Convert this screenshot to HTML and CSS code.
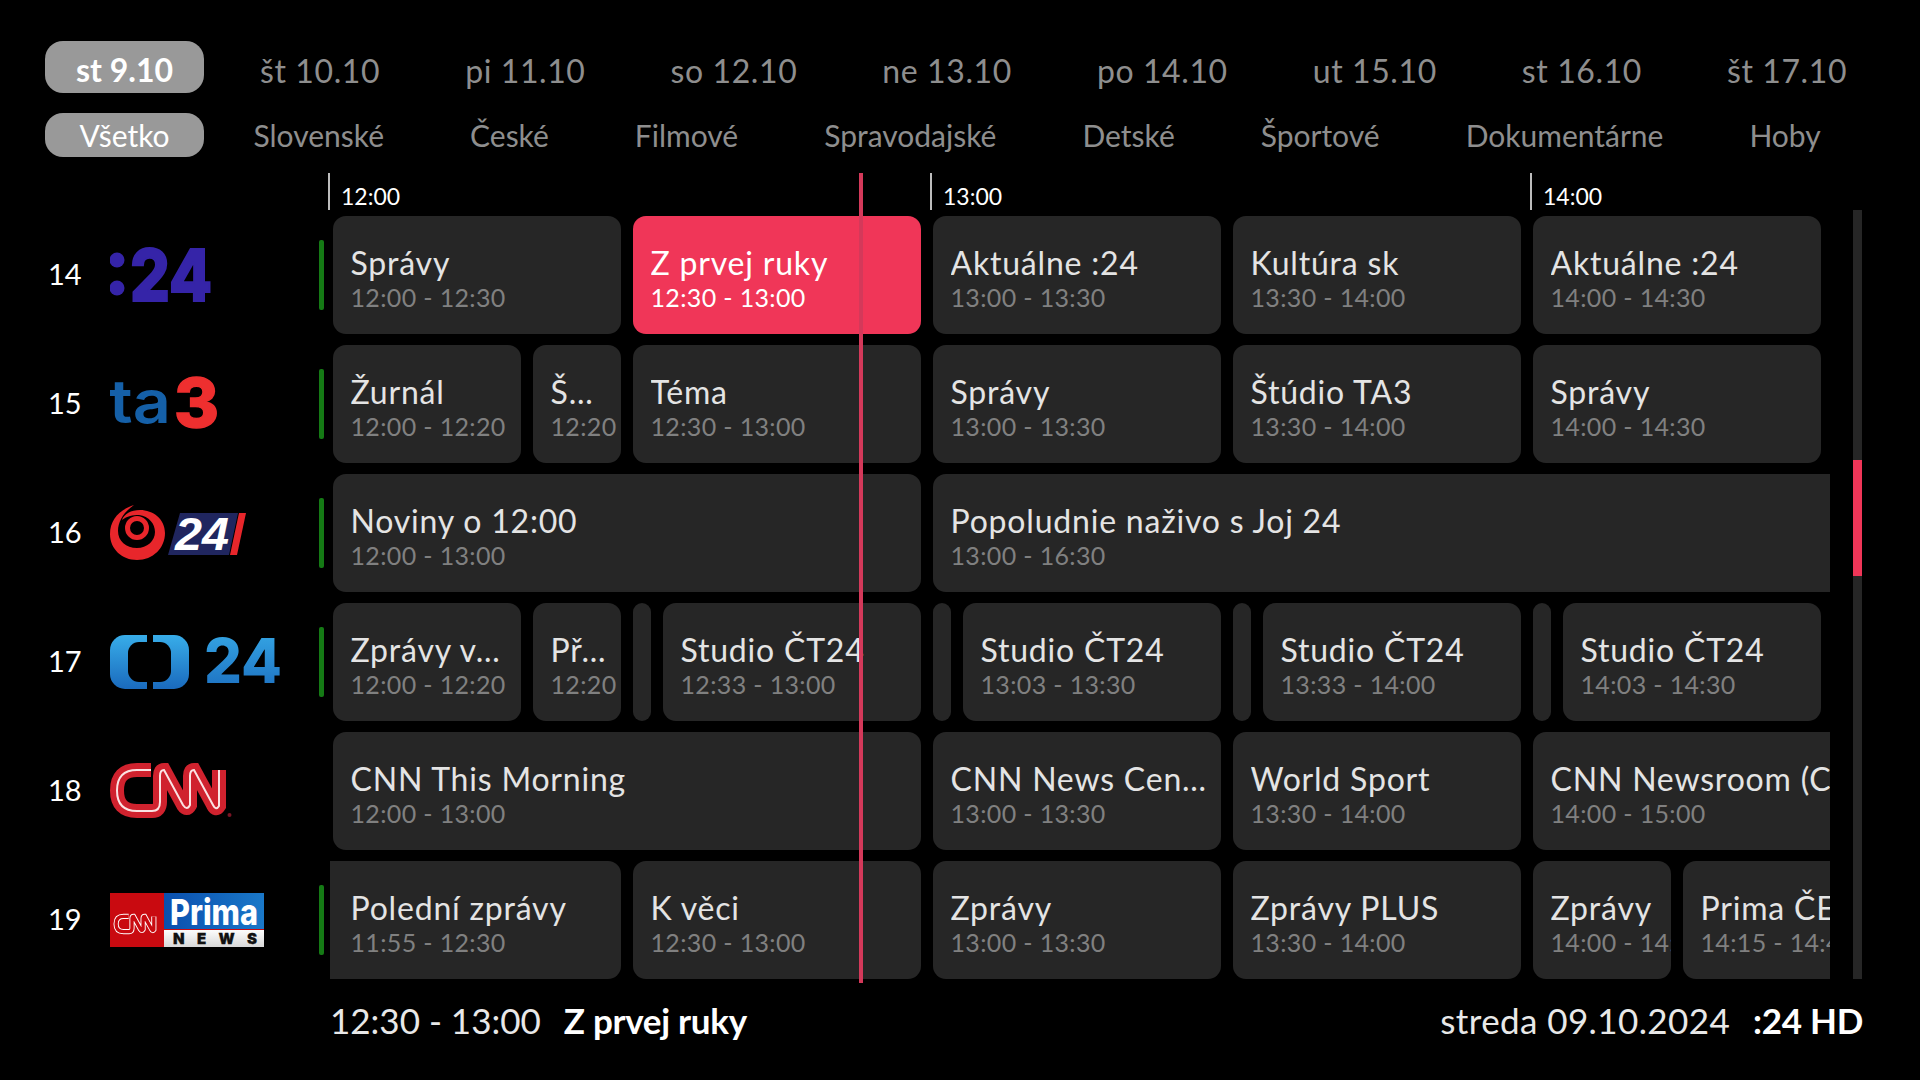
FILE: index.html
```html
<!DOCTYPE html>
<html lang="sk">
<head>
  <meta charset="UTF-8">
  <title>TV program</title>
  <link rel="stylesheet" href="styles.css">
</head>
<body>
  <nav class="tabs day-tabs">
    <div class="tab tab-active tab-bold">st 9.10</div>
    <div class="tab">št 10.10</div>
    <div class="tab">pi 11.10</div>
    <div class="tab">so 12.10</div>
    <div class="tab">ne 13.10</div>
    <div class="tab">po 14.10</div>
    <div class="tab">ut 15.10</div>
    <div class="tab">st 16.10</div>
    <div class="tab">št 17.10</div>
  </nav>
  <nav class="tabs genre-tabs">
    <div class="tab tab-active">Všetko</div>
    <div class="tab">Slovenské</div>
    <div class="tab">České</div>
    <div class="tab">Filmové</div>
    <div class="tab">Spravodajské</div>
    <div class="tab">Detské</div>
    <div class="tab">Športové</div>
    <div class="tab">Dokumentárne</div>
    <div class="tab">Hoby</div>
  </nav>

  <div class="timeline">
    <div class="hour hour-first">12:00</div>
    <div class="hour">13:00</div>
    <div class="hour hour-last">14:00</div>
  </div>

  <div class="now-line"></div>

  <div class="guide">
    <div class="rows">

      <div class="row">
        <div class="ch-num">14</div>
        <div class="ch-logo">
          <svg viewBox="110 216 209 118" width="209" height="118">
            <circle cx="117" cy="260" r="7.500" fill="#3524a8"/>
            <circle cx="117" cy="288" r="7.500" fill="#3524a8"/>
            <text class="logo-text" x="130" y="301" font-size="72" textLength="82" lengthAdjust="spacingAndGlyphs" fill="#3524a8" stroke="#3524a8" stroke-width="2">24</text>
          </svg>
        </div>
        <div class="live-bar"></div>
        <div class="programs">
          <div class="card w288"><div class="title">Správy</div><div class="time">12:00 - 12:30</div></div>
          <div class="card w288 card-active"><div class="title">Z prvej ruky</div><div class="time">12:30 - 13:00</div></div>
          <div class="card w288"><div class="title">Aktuálne :24</div><div class="time">13:00 - 13:30</div></div>
          <div class="card w288"><div class="title">Kultúra sk</div><div class="time">13:30 - 14:00</div></div>
          <div class="card w288"><div class="title">Aktuálne :24</div><div class="time">14:00 - 14:30</div></div>
        </div>
      </div>

      <div class="row">
        <div class="ch-num">15</div>
        <div class="ch-logo">
          <svg viewBox="110 345 209 118" width="209" height="118">
            <text class="logo-text logo-medium" x="109" y="423" font-size="60" textLength="62" lengthAdjust="spacingAndGlyphs" fill="#1560a8">ta</text>
            <text class="logo-text" x="174" y="427" font-size="68" textLength="45" lengthAdjust="spacingAndGlyphs" fill="#ee2f2f" stroke="#ee2f2f" stroke-width="1.500">3</text>
          </svg>
        </div>
        <div class="live-bar"></div>
        <div class="programs">
          <div class="card w188"><div class="title">Žurnál</div><div class="time">12:00 - 12:20</div></div>
          <div class="card w88"><div class="title">Š…</div><div class="time">12:20</div></div>
          <div class="card w288"><div class="title">Téma</div><div class="time">12:30 - 13:00</div></div>
          <div class="card w288"><div class="title">Správy</div><div class="time">13:00 - 13:30</div></div>
          <div class="card w288"><div class="title">Štúdio TA3</div><div class="time">13:30 - 14:00</div></div>
          <div class="card w288"><div class="title">Správy</div><div class="time">14:00 - 14:30</div></div>
        </div>
      </div>

      <div class="row">
        <div class="ch-num">16</div>
        <div class="ch-logo">
          <svg viewBox="110 474 209 118" width="209" height="118">
            <path d="M134 505 C119 510 110 520 110 534 C110 549 122 560 137 560 C153 560 165 548 165 533 C165 519 153 510 140 510 C131 510 124 514 122 520 C127 516 133 515 139 515 C149 516 155 524 155 532 C155 541 147 548 137 548 C126 548 118 541 118 531 C118 521 124 512 134 505 Z" fill="#e8262b"/>
            <circle cx="137" cy="528" r="9.500" fill="none" stroke="#e8262b" stroke-width="5"/>
            <path d="M180 513 H238 L229 555 H168 Z" fill="#20265f"/>
            <path d="M239 513 H246 L237 555 H230 Z" fill="#e8262b"/>
            <text class="logo-text logo-italic" x="175" y="550" font-size="47" textLength="54" lengthAdjust="spacingAndGlyphs" fill="#fff">24</text>
          </svg>
        </div>
        <div class="live-bar"></div>
        <div class="programs">
          <div class="card w588"><div class="title">Noviny o 12:00</div><div class="time">12:00 - 13:00</div></div>
          <div class="card w2088"><div class="title">Popoludnie naživo s Joj 24</div><div class="time">13:00 - 16:30</div></div>
        </div>
      </div>

      <div class="row">
        <div class="ch-num">17</div>
        <div class="ch-logo">
          <svg viewBox="110 603 209 118" width="209" height="118">
            <defs>
              <linearGradient id="ct-blue" x1="0" y1="0" x2="0" y2="1">
                <stop offset="0" stop-color="#38ade9"/>
                <stop offset="1" stop-color="#1a6abd"/>
              </linearGradient>
            </defs>
            <rect x="110" y="635" width="79" height="54" rx="15" fill="url(#ct-blue)"/>
            <rect x="128" y="642" width="43" height="40" rx="11" fill="#000"/>
            <rect x="147" y="633" width="6" height="58" fill="#000"/>
            <text class="logo-text" x="204" y="683" font-size="62" textLength="78" lengthAdjust="spacingAndGlyphs" fill="url(#ct-blue)">24</text>
          </svg>
        </div>
        <div class="live-bar"></div>
        <div class="programs">
          <div class="card w188"><div class="title">Zprávy v…</div><div class="time">12:00 - 12:20</div></div>
          <div class="card w88"><div class="title">Př…</div><div class="time">12:20</div></div>
          <div class="card w18"></div>
          <div class="card w258"><div class="title">Studio ČT24</div><div class="time">12:33 - 13:00</div></div>
          <div class="card w18"></div>
          <div class="card w258"><div class="title">Studio ČT24</div><div class="time">13:03 - 13:30</div></div>
          <div class="card w18"></div>
          <div class="card w258"><div class="title">Studio ČT24</div><div class="time">13:33 - 14:00</div></div>
          <div class="card w18"></div>
          <div class="card w258"><div class="title">Studio ČT24</div><div class="time">14:03 - 14:30</div></div>
        </div>
      </div>

      <div class="row">
        <div class="ch-num">18</div>
        <div class="ch-logo">
          <svg viewBox="110 732 209 118" width="209" height="118">
            <path d="M151 770 H137 Q117 770 117 790.500 Q117 811 137 811 H152 Q160 811 160 802 V776 Q160 770 164 770 L183 805 Q187 811 190 805 V776 Q190 770 194 770 L213 805 Q216 811 219 806 V770" fill="none" stroke="#d0222e" stroke-width="14"/>
            <path d="M151 770 H137 Q117 770 117 790.500 Q117 811 137 811 H152 Q160 811 160 802 V776 Q160 770 164 770 L183 805 Q187 811 190 805 V776 Q190 770 194 770 L213 805 Q216 811 219 806 V770" fill="none" stroke="#fbe3e3" stroke-width="2"/>
            <circle cx="229.500" cy="815" r="2" fill="#7a1424"/>
          </svg>
        </div>
        <div class="programs">
          <div class="card w588"><div class="title">CNN This Morning</div><div class="time">12:00 - 13:00</div></div>
          <div class="card w288"><div class="title">CNN News Cen…</div><div class="time">13:00 - 13:30</div></div>
          <div class="card w288"><div class="title">World Sport</div><div class="time">13:30 - 14:00</div></div>
          <div class="card w588"><div class="title">CNN Newsroom (CNN)</div><div class="time">14:00 - 15:00</div></div>
        </div>
      </div>

      <div class="row">
        <div class="ch-num">19</div>
        <div class="ch-logo">
          <svg viewBox="110 861 209 118" width="209" height="118">
            <defs>
              <linearGradient id="prima-blue" x1="0" y1="0" x2="1" y2="0">
                <stop offset="0" stop-color="#0a4fae"/>
                <stop offset="1" stop-color="#1a78c8"/>
              </linearGradient>
              <linearGradient id="prima-white" x1="0" y1="0" x2="0" y2="1">
                <stop offset="0" stop-color="#fff"/>
                <stop offset="1" stop-color="#d8d8d8"/>
              </linearGradient>
            </defs>
            <rect x="110" y="893" width="54" height="54" fill="#c90a10"/>
            <rect x="164" y="893" width="100" height="36" fill="url(#prima-blue)"/>
            <rect x="164" y="929" width="100" height="18" fill="url(#prima-white)"/>
            <rect x="164" y="929" width="100" height="1" fill="#c90a10"/>
            <g transform="translate(72.800 631.500) scale(0.37)">
              <path d="M151 770 H137 Q117 770 117 790.500 Q117 811 137 811 H152 Q160 811 160 802 V776 Q160 770 164 770 L183 805 Q187 811 190 805 V776 Q190 770 194 770 L213 805 Q216 811 219 806 V770" fill="none" stroke="#fff" stroke-width="14"/>
              <path d="M151 770 H137 Q117 770 117 790.500 Q117 811 137 811 H152 Q160 811 160 802 V776 Q160 770 164 770 L183 805 Q187 811 190 805 V776 Q190 770 194 770 L213 805 Q216 811 219 806 V770" fill="none" stroke="#c90a10" stroke-width="9"/>
            </g>
            <text class="logo-text" x="170" y="925" font-size="36" textLength="88" lengthAdjust="spacingAndGlyphs" fill="#fff">Prima</text>
            <text class="logo-text logo-heavy" x="173" y="944" font-size="15" textLength="84" fill="#111" stroke="#111" stroke-width="0.300">NEWS</text>
          </svg>
        </div>
        <div class="live-bar"></div>
        <div class="programs">
          <div class="card card-cut w291"><div class="title">Polední zprávy</div><div class="time">11:55 - 12:30</div></div>
          <div class="card w288"><div class="title">K věci</div><div class="time">12:30 - 13:00</div></div>
          <div class="card w288"><div class="title">Zprávy</div><div class="time">13:00 - 13:30</div></div>
          <div class="card w288"><div class="title">Zprávy PLUS</div><div class="time">13:30 - 14:00</div></div>
          <div class="card w138"><div class="title">Zprávy</div><div class="time">14:00 - 14:15</div></div>
          <div class="card w288"><div class="title">Prima ČESKO</div><div class="time">14:15 - 14:45</div></div>
        </div>
      </div>

    </div>
    <div class="scrollbar"><div class="scroll-thumb"></div></div>
  </div>

  <footer class="status">
    <div class="status-left">
      <span>12:30 - 13:00</span>
      <b>Z prvej ruky</b>
    </div>
    <div class="status-right">
      <span>streda 09.10.2024</span>
      <b>:24 HD</b>
    </div>
  </footer>
</body>
</html>
```

FILE: styles.css
```css
html, body {
  margin: 0;
  padding: 0;
  width: 1920px;
  height: 1080px;
  overflow: hidden;
  background-color: #000;
  color: #fff;
  font-family: "Lato", "Liberation Sans", sans-serif;
}

body {
  padding-top: 41px;
  box-sizing: border-box;
}

/* tabs */
.tabs {
  display: flex;
  align-items: center;
  margin-left: 45px;
  color: #8e8e8e;
}

.day-tabs {
  height: 52px;
  font-size: 32px;
  letter-spacing: 0.6px;
}

.day-tabs .tab {
  padding-top: 7px;
}

.genre-tabs {
  height: 44px;
  margin-top: 20px;
  font-size: 30px;
}

.genre-tabs .tab {
  padding-left: 43px;
  padding-right: 43px;
}

.tab {
  padding: 0 42.5px;
  white-space: nowrap;
}

.tabs .tab-active {
  box-sizing: border-box;
  width: 159px;
  height: 100%;
  margin-right: 13.5px;
  padding: 0;
  display: flex;
  align-items: center;
  justify-content: center;
  background-color: #999;
  color: #fff;
  border-radius: 18px;
}

.genre-tabs .tab-active {
  margin-right: 6.5px;
}

.tabs .tab-bold {
  padding-top: 4px;
  font-weight: 700;
  letter-spacing: 0;
}

/* hours */
.timeline {
  display: flex;
  height: 37px;
  margin-top: 16px;
  margin-left: 328px;
  font-size: 23px;
}

.hour {
  flex: none;
  box-sizing: border-box;
  width: 600px;
  padding: 9px 0 0 11px;
  border-left: 2px solid #bdbdbd;
}

.hour-first {
  width: 602px;
}

.hour-last {
  width: 390px;
}

.now-line {
  position: absolute;
  left: 859px;
  top: 173px;
  width: 4px;
  height: 810px;
  background-color: #d4395a;
  z-index: 5;
}

/* channel rows */
.guide {
  display: flex;
  height: 769px;
}

.rows {
  display: flex;
  flex-direction: column;
  gap: 11px;
  width: 1781px;
  margin-left: 49px;
  padding-top: 6px;
}

.row {
  display: flex;
  align-items: center;
  height: 118px;
}

.ch-num {
  box-sizing: border-box;
  width: 61px;
  margin-left: -1px;
  margin-right: 1px;
  padding-bottom: 4px;
  font-size: 29px;
}

.ch-logo {
  width: 209px;
  height: 118px;
}

.ch-logo svg {
  display: block;
}

.logo-text {
  font-family: "Inter", "DejaVu Sans", sans-serif;
  font-weight: 800;
}

.logo-medium {
  font-weight: 600;
}

.logo-heavy {
  font-weight: 900;
}

.logo-italic {
  font-family: "Liberation Sans", sans-serif;
  font-style: italic;
  font-weight: 700;
}

.live-bar {
  width: 5px;
  height: 70px;
  background-color: #157a15;
  border-radius: 2px;
}

.programs {
  display: flex;
  gap: 12px;
  width: 1500px;
  height: 118px;
  margin-left: 6px;
  padding-left: 3px;
  box-sizing: border-box;
  overflow: hidden;
}

/* the CNN row has no live bar, keep the cards in line */
.ch-logo + .programs {
  margin-left: 11px;
}

.card {
  flex: none;
  box-sizing: border-box;
  height: 118px;
  padding: 28px 0 0 17.5px;
  background-color: #262626;
  border-radius: 13px;
  overflow: hidden;
}

.card-cut {
  margin-left: -3px;
  padding-left: 20.5px;
  border-radius: 0 13px 13px 0;
}

.card-active {
  background-color: #f03658;
}

.card-active .title,
.card-active .time {
  color: #fff;
}

.w18 { width: 18px; padding: 0; }
.w88 { width: 88px; }
.w138 { width: 138px; }
.w188 { width: 188px; }
.w258 { width: 258px; }
.w288 { width: 288px; }
.w291 { width: 291px; }
.w588 { width: 588px; }
.w2088 { width: 2088px; }

.title {
  margin-right: 6px;
  font-size: 32px;
  line-height: 37px;
  letter-spacing: 0.8px;
  color: #e4e4e4;
  white-space: nowrap;
  overflow: hidden;
  text-overflow: ellipsis;
}

.time {
  font-size: 25px;
  line-height: 33px;
  letter-spacing: 0.35px;
  color: #808080;
  white-space: nowrap;
}

/* scrollbar */
.scrollbar {
  width: 9px;
  margin-left: 23px;
  background-color: #262626;
}

.scroll-thumb {
  height: 116px;
  margin-top: 250px;
  background-color: #f03658;
}

/* bottom line */
.status {
  display: flex;
  justify-content: space-between;
  align-items: center;
  height: 60px;
  margin-left: 330px;
  margin-right: 57px;
  margin-top: 11px;
  font-size: 35px;
  color: #e8e8e8;
}

.status b {
  margin-left: 14px;
  letter-spacing: -0.3px;
  color: #fff;
}

.status-right span {
  letter-spacing: 0.4px;
}

.status-left,
.status-right {
  white-space: nowrap;
}
```
